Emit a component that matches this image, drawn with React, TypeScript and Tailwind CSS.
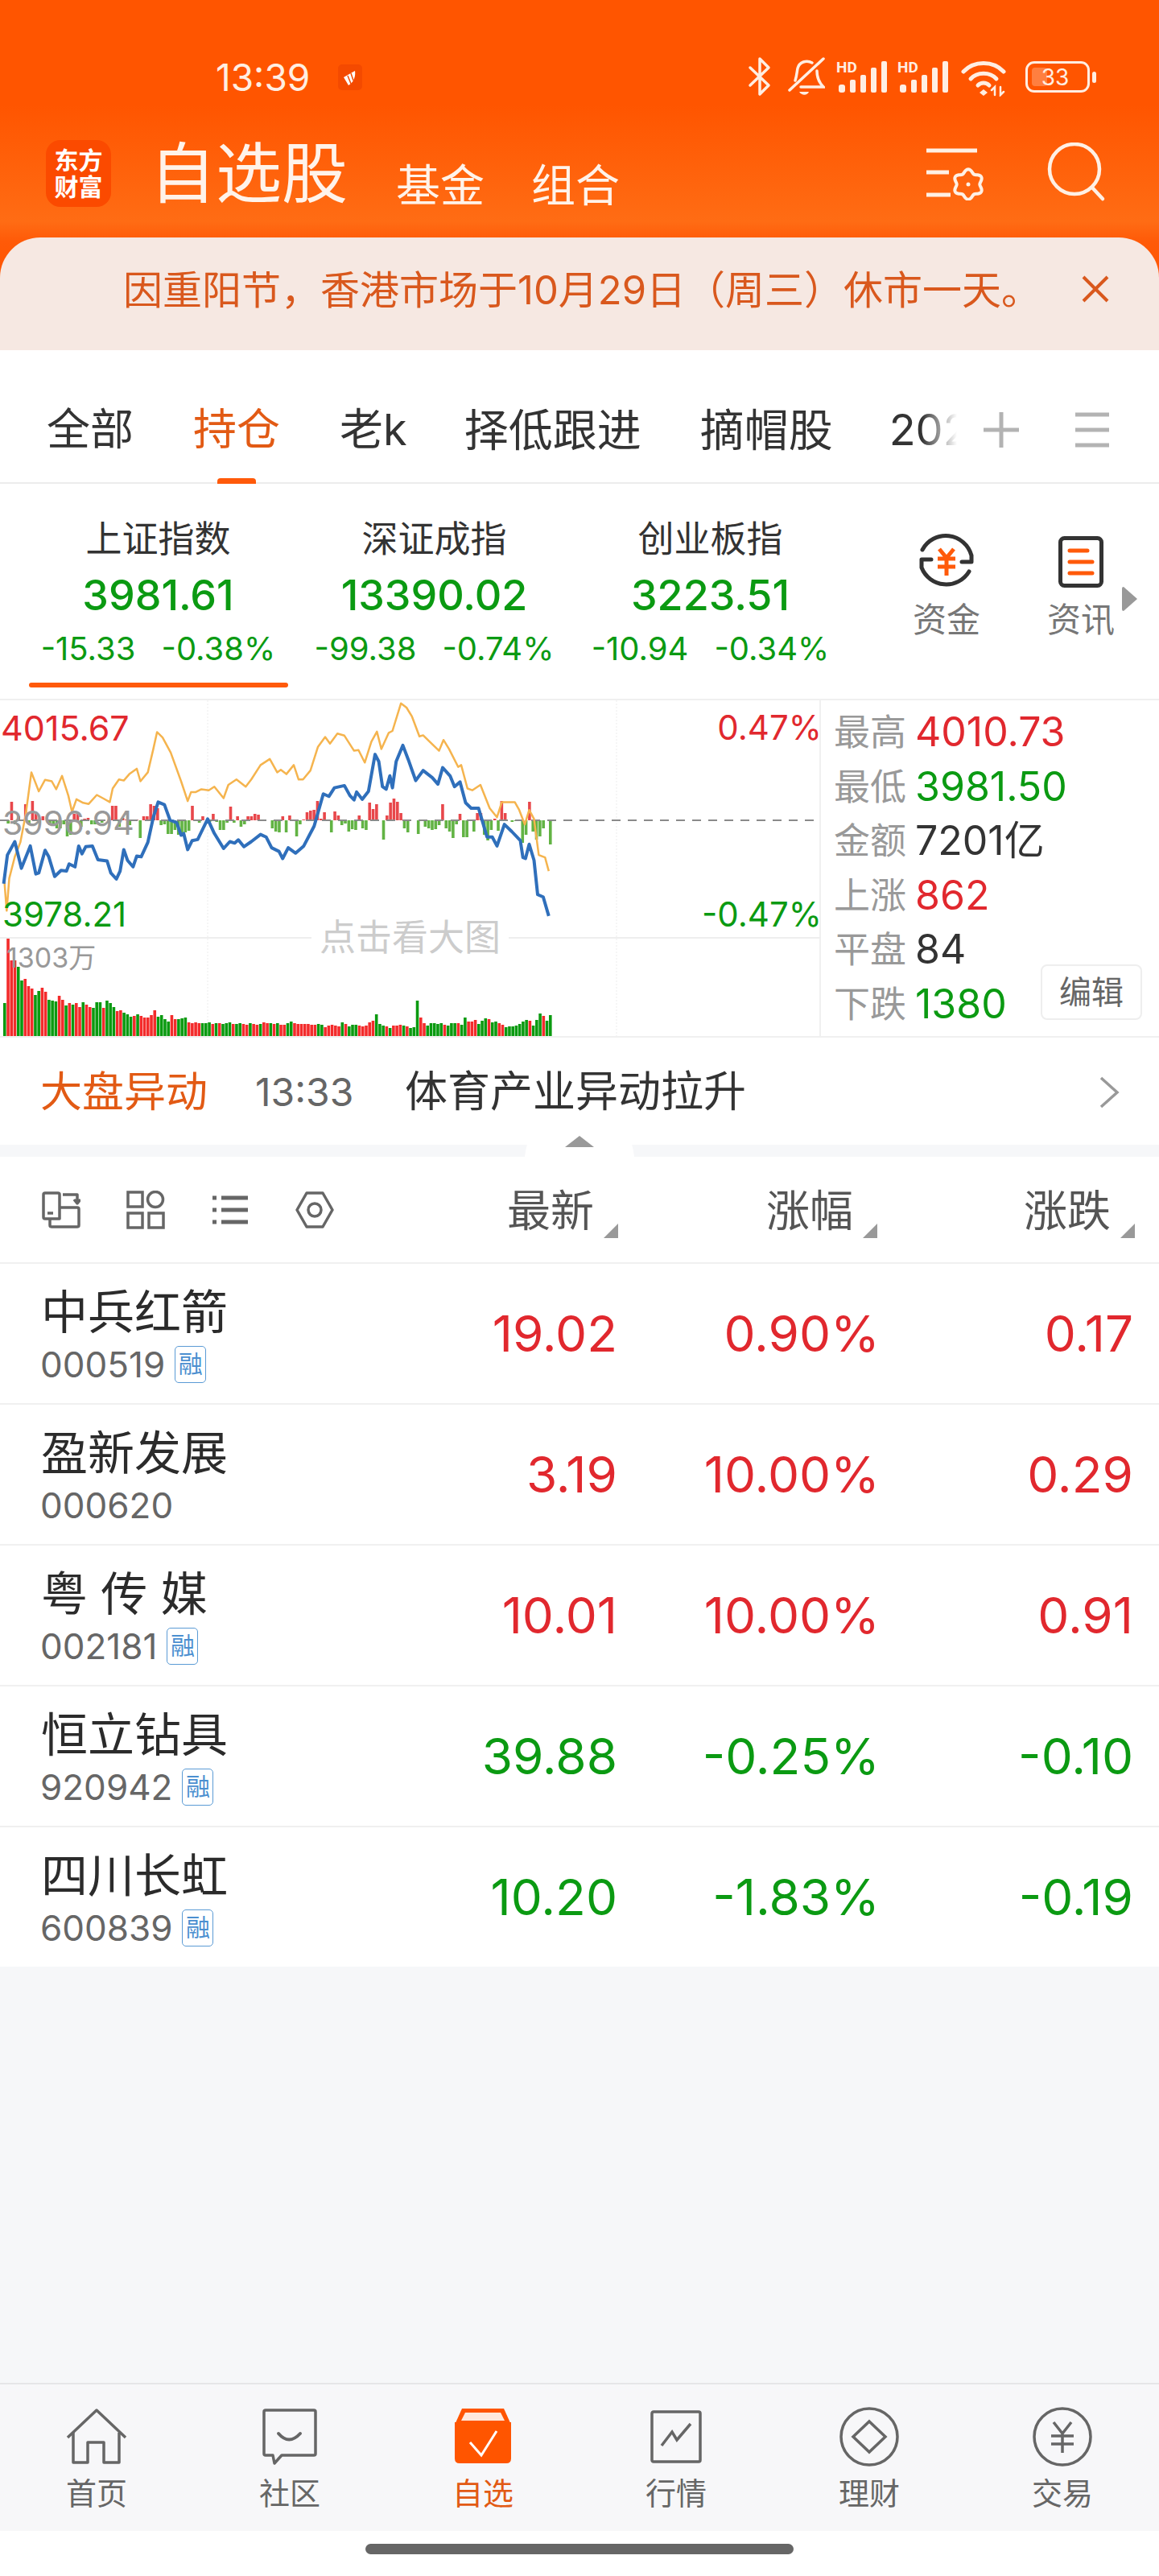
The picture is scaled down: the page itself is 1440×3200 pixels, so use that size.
import React from "react";

const UP = "text-[#e1282e]";
const DOWN = "text-[#0b9a12]";

// price lines, x/y on a 2.178 x 2.24 tracing grid, see toChart()
const avgLine: number[][] = [
  [12, 1110], [18, 1190], [25, 1100], [40, 1040], [55, 1000], [70, 920], [85, 805], [105, 858], [122, 826], [140, 830], [152, 852], [168, 815], [185, 870], [195, 915], [207, 880], [225, 890], [240, 893], [262, 868], [280, 878], [297, 888], [305, 850], [322, 825], [335, 828], [350, 810], [370, 795], [380, 830], [400, 805], [415, 740], [425, 693], [440, 708], [462, 750], [490, 830], [508, 885], [517, 860], [530, 860], [545, 852], [565, 855], [580, 845], [605, 877], [618, 840], [640, 825], [665, 845], [680, 825], [705, 785], [730, 768], [750, 805], [760, 798], [775, 810], [795, 785], [808, 825], [820, 825], [840, 800], [860, 735], [880, 707], [893, 725], [913, 697], [932, 703], [958, 745], [970, 743], [987, 778], [1005, 720], [1020, 692], [1032, 740], [1052, 695], [1062, 690], [1085, 613], [1100, 625], [1115, 650], [1135, 705], [1145, 702], [1165, 722], [1188, 745], [1200, 715], [1215, 740], [1240, 790], [1248, 785], [1265, 850], [1278, 855], [1300, 840], [1325, 905], [1345, 930], [1358, 888], [1393, 888], [1405, 910], [1420, 950], [1432, 910], [1445, 935], [1458, 1035], [1475, 1042], [1485, 1080],
];

const priceLine: number[][] = [
  [10, 1115], [20, 1035], [40, 998], [58, 1072], [82, 1010], [97, 1088], [105, 1085], [122, 1022], [132, 1040], [148, 1095], [165, 1078], [180, 1080], [187, 1060], [203, 1068], [213, 1010], [222, 1032], [232, 1012], [250, 1010], [265, 1048], [290, 1052], [300, 1085], [315, 1102], [325, 1080], [335, 1020], [345, 1050], [360, 1068], [370, 1038], [382, 1040], [400, 1000], [415, 930], [428, 888], [445, 895], [460, 938], [478, 945], [490, 980], [497, 975], [508, 1020], [520, 995], [535, 992], [562, 935], [580, 975], [605, 1017], [622, 998], [635, 1002], [645, 993], [660, 1012], [680, 998], [705, 978], [720, 985], [735, 1015], [755, 1025], [765, 1045], [780, 1015], [800, 1030], [822, 1010], [850, 955], [875, 865], [890, 872], [905, 848], [932, 842], [947, 870], [958, 882], [965, 860], [980, 880], [997, 858], [1015, 755], [1025, 775], [1035, 845], [1045, 852], [1055, 815], [1062, 848], [1072, 775], [1090, 730], [1105, 770], [1125, 828], [1145, 800], [1170, 820], [1185, 838], [1198, 792], [1218, 815], [1230, 845], [1245, 832], [1260, 890], [1275, 905], [1295, 905], [1318, 985], [1332, 985], [1345, 1010], [1365, 950], [1385, 970], [1408, 995], [1415, 1042], [1422, 1045], [1432, 1005], [1445, 1050], [1455, 1145], [1470, 1152], [1485, 1205],
];

// money flow bars around the previous close, + is red and - is green
const flowBars = [
  0, -4, 23, -5, 5, 0, 20, -4, 24, 8, -3, 5, 0, -6, -6, -10, -10, -5, -20, -18, 8, 10, -8, 2, 3, -5, -5, 0, -3, 0, 1, 18, 18, -8, 3, 1, -6, 1, 1, -22, 5, 5, 20, 18, 15, -6, -5, -17, -17, -12, -18, -20, -15, -13, 18, 0, -3, 5, 0, -2, 8, -2, -12, -12, -3, 17, -3, 5, -8, -5, 5, 5, 8, 7, 1, 0, 0, -10,
  -14, -15, 5, -15, 6, 1, -20, -5, 1, 10, 12, 13, 24, 2, 10, 1, -15, 11, 6, -6, -4, -14, -11, -12, 6, -10, -12, 22, 14, 20, 0, -24, 6, 22, 27, 23, 9, -10, -15, 0, 0, -17, 1, -8, -10, -12, -11, -6, 20, -10, -14, -22, -5, 8, -21, -21, 1, -14, 9, 9, -18, -25, -12, 2, -13, 24, 9, 0, -2, -1, -1, -28, -18, 23, -14, -24, -20, -10, 0, -30,
];

// volume bars: positive was an up minute (red), negative a down minute (green)
const volumeBars = [
  -41, 121, 94, 94, -86, -69, 71, 62, 59, -51, -56, 60, 55, -45, -44, -43, 50, 45, -38, 41, -39, 41, 36, -42, 39, 36, -35, -42, -42, 35, -44, -41, -36, 31, 32, -29, -27, -24, 25, -27, 25, 23, 23, 26, 32, -24, -26, -21, -18, 26, 21, -21, -22, -23, 17, 16, 17, 16, -16, -16, -17, 15, -16, 16, -15, -16, -17, 15, -15, -16, 15, 14, -16, 15, 14, -15, 17, 16,
  -16, 15, -16, 14, 14, -16, -18, 16, 15, 15, 15, 15, 14, 14, -15, -14, 11, 13, 14, 13, 12, -17, 15, -12, -14, -14, 13, 12, 13, 17, 19, -27, -15, -13, 12, -10, 13, 13, 14, -13, 12, -10, -11, -44, 23, 16, -13, -16, -16, -15, -16, 14, -13, -16, -16, 16, -14, -23, 18, 18, 20, -15, -19, -22, 21, -17, -18, 16, 14, -11, -12, -12, -13, -15, -18, -20, 19, -13, -20, -28, 25, -19, -26,
];

const toChart = (pts: number[][]) =>
  pts.map(([x, y]) => `${(x / 2.178).toFixed(1)},${(y / 2.24 - 270).toFixed(1)}`).join(" ");

const flowStep = 678 / (flowBars.length - 1);
const volumeStep = 678 / (volumeBars.length - 1);

const stocks = [
  { name: "中兵红箭", code: "000519", rong: true, price: "19.02", pct: "0.90%", diff: "0.17", up: true },
  { name: "盈新发展", code: "000620", rong: false, price: "3.19", pct: "10.00%", diff: "0.29", up: true },
  { name: "粤 传 媒", code: "002181", rong: true, price: "10.01", pct: "10.00%", diff: "0.91", up: true },
  { name: "恒立钻具", code: "920942", rong: true, price: "39.88", pct: "-0.25%", diff: "-0.10", up: false },
  { name: "四川长虹", code: "600839", rong: true, price: "10.20", pct: "-1.83%", diff: "-0.19", up: false },
];

const indexes = [
  { name: "上证指数", value: "3981.61", diff: "-15.33", pct: "-0.38%", active: true },
  { name: "深证成指", value: "13390.02", diff: "-99.38", pct: "-0.74%", active: false },
  { name: "创业板指", value: "3223.51", diff: "-10.94", pct: "-0.34%", active: false },
];

const SignalIcon = () => (
  <svg width="64" height="42" viewBox="0 0 64 42" fill="#ffeee2">
    <text x="0" y="17" fontSize="19" fontWeight="700" fontFamily="Roboto, sans-serif">HD</text>
    <rect x="3" y="32" width="8" height="10" rx="3" />
    <rect x="17" y="26" width="7" height="16" rx="2" />
    <rect x="30" y="20" width="7" height="22" rx="2" />
    <rect x="43" y="11" width="7" height="31" rx="2" />
    <rect x="56" y="3" width="7" height="39" rx="2" />
  </svg>
);

const StatusBar = () => (
  <div className="h-[172px] relative flex items-start pt-[72px] pl-[268px] text-[#ffeee2]">
    <span className="text-[46px] leading-[48px] w-[152px]">13:39</span>
    {/* little notification glyph beside the clock */}
    <svg width="30" height="32" viewBox="0 0 30 32" className="mt-[8px]">
      <rect width="30" height="32" rx="5" fill="#f44a00" />
      <path d="M7 16 L21 8 C22 14 20 22 13 26 Z" fill="#fff" />
      <path d="M12 14 L16 24 M16 11 L19 20" stroke="#f44a00" strokeWidth="1.5" />
    </svg>
    <div className="absolute left-[929px] top-[70px] flex items-start">
      <svg width="30" height="50" viewBox="0 0 30 50" fill="none" stroke="#ffeee2" strokeWidth="3.5" strokeLinecap="round" strokeLinejoin="round">
        <path d="M3 14 L26 36 L15 47 V3 L26 14 L3 36" />
      </svg>
      <svg width="46" height="50" viewBox="0 0 46 50" fill="none" stroke="#ffeee2" strokeWidth="3.5" strokeLinecap="round" className="ml-[20px]">
        <path d="M2 42 L44 3" />
        <path d="M9 30 C11 24 11 20 12 15 C14 7 23 4 30 8" />
        <path d="M36 18 C36 26 38 32 44 38 H16" />
        <path d="M14 44 H26 C24 49 17 49 14 44 Z" fill="#ffeee2" stroke="none" />
      </svg>
      <div className="ml-[14px] mt-[3px]"><SignalIcon /></div>
      <div className="ml-[12px] mt-[3px]"><SignalIcon /></div>
      <svg width="60" height="46" viewBox="0 0 60 46" fill="none" stroke="#ffeee2" strokeWidth="5" strokeLinecap="round" className="ml-[15px] mt-[4px]">
        <path d="M3 15 C16 1 40 1 53 15" />
        <path d="M12 24 C20 15 36 15 44 24" />
        <path d="M21 32 C25 28 31 28 35 32" />
        <path d="M28 37 L33 41 L28 45 L23 41 Z" fill="#ffeee2" stroke="none" />
        <path d="M42 44 V34 L38 38 M49 34 V44 L53 40" strokeWidth="2.5" />
      </svg>
      <div className="relative ml-[20px] mt-[6px] w-[80px] h-[39px] rounded-[11px] border-[3px] border-[#ffeee2] flex items-center justify-center">
        <div className="absolute left-[5px] top-[5px] bottom-[5px] w-[19px] rounded-[4px] bg-[#ffffff40]" />
        <span className="relative text-[28px] leading-none pr-[6px]">33</span>
        <div className="absolute right-[-11px] top-[10px] w-[5px] h-[14px] rounded-full bg-[#ffeee2]" />
      </div>
    </div>
  </div>
);

// scalloped nut drawn around the settings lines
const gearPath = () => {
  const pts: string[] = [];
  for (let i = 0; i < 72; i++) {
    const a = (i / 72) * Math.PI * 2;
    const r = 16.5 + 2.2 * Math.cos(a * 6);
    pts.push(`${(21 + r * Math.sin(a)).toFixed(2)},${(20 + r * Math.cos(a)).toFixed(2)}`);
  }
  return `M${pts.join(" L")} Z`;
};

const AppBar = () => (
  <div className="flex items-start pl-[57px] h-[123px] text-[#fff3ea]">
    <div className="w-[81px] h-[83px] mt-[2px] rounded-[18px] bg-[#fb4a00] flex flex-col items-center justify-center font-['Liberation_Serif','Noto_Sans_CJK_SC',serif] font-bold text-[30px] leading-[33px] text-white">
      <span>东方</span>
      <span>财富</span>
    </div>
    <span className="ml-[48px] text-[82px] leading-[88px]">自选股</span>
    <span className="ml-[60px] mt-[28px] text-[55px] leading-[60px]">基金</span>
    <span className="ml-[58px] mt-[28px] text-[55px] leading-[60px]">组合</span>
    <svg width="74" height="66" viewBox="0 0 74 66" fill="none" stroke="#fff0e4" strokeWidth="5" className="ml-[381px] mt-[11px]">
      <path d="M0 4 H63 M0 31 H28 M0 59 H30" />
      <path d={gearPath()} transform="translate(31 26)" strokeWidth="4" />
      <circle cx="52" cy="46" r="2.5" fill="#fff0e4" stroke="none" />
    </svg>
    <svg width="74" height="74" viewBox="0 0 74 74" fill="none" stroke="#fff0e4" strokeWidth="4.5" className="ml-[75px] mt-[5px]">
      <ellipse cx="35" cy="33" rx="31" ry="31" />
      <path d="M57 56 L70 70" strokeLinecap="round" />
    </svg>
  </div>
);

const Banner = () => (
  <div className="h-[140px] bg-[#f6e8e2] rounded-t-[50px] flex items-center pl-[153px] text-[#d9581d]">
    <span className="text-[49px] leading-[60px] w-[1190px] mt-[-8px] whitespace-nowrap">因重阳节，香港市场于10月29日（周三）休市一天。</span>
    <svg width="36" height="36" viewBox="0 0 36 36" fill="none" stroke="#d9581d" strokeWidth="4" className="mt-[-12px]">
      <path d="M3 3 L33 33 M33 3 L3 33" />
    </svg>
  </div>
);

const Tabs = () => (
  <div className="relative h-[166px] bg-white border-b-2 border-[#ececec] flex items-start pt-[65px] pl-[58px] text-[54px] leading-[68px] text-[#333]">
    <span>全部</span>
    <span className="ml-[74px] text-[#e25a14]">持仓</span>
    <span className="ml-[74px]">老k</span>
    <span className="ml-[71px] text-[55px]">择低跟进</span>
    <span className="ml-[73px] text-[55px]">摘帽股</span>
    <div className="relative ml-[70px] w-[84px] overflow-hidden whitespace-nowrap">
      2025
      <div className="absolute inset-y-0 right-0 w-[44px] bg-gradient-to-l from-white to-transparent" />
    </div>
    <svg width="44" height="44" viewBox="0 0 44 44" stroke="#b3b3b3" strokeWidth="5" className="ml-[33px] mt-[12px]">
      <path d="M22 0 V44 M0 22 H44" />
    </svg>
    <svg width="42" height="44" viewBox="0 0 42 44" stroke="#b3b3b3" strokeWidth="5" className="ml-[70px] mt-[12px]">
      <path d="M0 3 H42 M0 22 H42 M0 41 H42" />
    </svg>
    <div className="absolute left-[270px] bottom-[-2px] w-[48px] h-[7px] rounded-t-[4px] bg-[#ff5a0a]" />
  </div>
);

const IndexStrip = () => (
  <div className="h-[269px] bg-white flex pl-[25px] border-b-2 border-[#f0f0f0]">
    {indexes.map((idx) => (
      <div key={idx.name} className="w-[343px] flex flex-col items-center pt-[44px]">
        <div className="text-[45px] leading-[50px] text-[#333]">{idx.name}</div>
        <div className={`mt-[10px] text-[52px] leading-[70px] font-medium ${DOWN}`}>{idx.value}</div>
        <div className={`mt-[6px] text-[40px] leading-[50px] flex gap-[32px] ${DOWN}`}>
          <span>{idx.diff}</span>
          <span>{idx.pct}</span>
        </div>
        {idx.active && <div className="mt-[17px] w-[322px] h-[6px] rounded-full bg-[#ff5a0a]" />}
      </div>
    ))}
    <div className="w-[244px] flex flex-col items-center pt-[60px]">
      <svg width="70" height="70" viewBox="0 0 70 70" fill="none" stroke="#333" strokeWidth="5" strokeLinecap="round" strokeLinejoin="round">
        <path d="M5 22 A33 33 0 0 1 66 29 V37 H54" />
        <path d="M63 49 A33 33 0 0 1 4 44 V34 H16" />
        <path d="M26 21 L35 32 L44 21 M24 33 H46 M24 43 H46 M35 32 V54" stroke="#ff5a0a" strokeWidth="5" strokeLinecap="butt" />
      </svg>
      <span className="mt-[14px] text-[42px] leading-[50px] text-[#777]">资金</span>
    </div>
    <div className="relative w-[90px] flex flex-col items-center pt-[65px]">
      <svg width="56" height="64" viewBox="0 0 56 64" fill="none">
        <rect x="2.5" y="2.5" width="51" height="59" rx="5" stroke="#333" strokeWidth="5" />
        <path d="M14 18 H36 M14 32 H42 M14 46 H42" stroke="#ff5a0a" strokeWidth="5" strokeLinecap="round" />
      </svg>
      <span className="mt-[15px] text-[42px] leading-[50px] text-[#777]">资讯</span>
      <svg width="19" height="30" viewBox="0 0 19 30" fill="#999" className="absolute left-[96px] top-[128px]">
        <path d="M2 0 L19 15 L2 30 Q0 30 0 28 V2 Q0 0 2 0 Z" />
      </svg>
    </div>
  </div>
);

const MinuteChart = () => (
  <div className="relative w-[1020px] h-[417px] border-r-2 border-[#f0f0f0]">
    <svg width="1020" height="417" viewBox="0 0 1020 417" className="absolute inset-0">
      <path d="M258 0 V417 M766 0 V417" stroke="#f4f4f4" strokeWidth="1.5" strokeDasharray="2 2" />
      <path d="M0 295 H1020" stroke="#eeeeee" strokeWidth="2" />
      {flowBars.map((v, i) =>
        v === 0 ? null : (
          <rect
            key={i}
            x={4 + i * flowStep}
            y={v > 0 ? 149 - v : 149}
            width={3.6}
            height={Math.abs(v)}
            fill={v > 0 ? "#e8474b" : "#62b344"}
          />
        )
      )}
      <path d="M0 149 H1020" stroke="#8a8a8a" strokeWidth="2" strokeDasharray="11 9" />
      <polyline points={toChart(avgLine)} fill="none" stroke="#f5b44e" strokeWidth="2.5" strokeLinejoin="round" />
      <polyline points={toChart(priceLine)} fill="none" stroke="#2f6fbb" strokeWidth="4" strokeLinejoin="round" />
      {volumeBars.map((v, i) => (
        <rect
          key={i}
          x={4 + i * volumeStep}
          y={417 - Math.abs(v)}
          width={3.6}
          height={Math.abs(v)}
          fill={v > 0 ? "#f32b2b" : "#0a9a10"}
        />
      ))}
    </svg>
    <span className={`absolute left-[1px] top-[8px] text-[43px] leading-[52px] ${UP}`}>4015.67</span>
    <span className={`absolute right-[-3px] top-[8px] text-[42px] leading-[52px] ${UP}`}>0.47%</span>
    <span className="absolute left-[3px] top-[124px] text-[41px] leading-[56px] text-[#999]">3996.94</span>
    <span className={`absolute left-[3px] top-[240px] text-[42px] leading-[52px] ${DOWN}`}>3978.21</span>
    <span className={`absolute right-[-3px] top-[240px] text-[42px] leading-[52px] ${DOWN}`}>-0.47%</span>
    <span className="absolute left-[8px] top-[298px] text-[34px] leading-[44px] text-[#999]">1303万</span>
    <span className="absolute left-[387px] top-[270px] px-[10px] bg-white text-[45px] leading-[50px] text-[#ccc]">点击看大图</span>
  </div>
);

const statRows = [
  { label: "最高", value: "4010.73", cls: UP },
  { label: "最低", value: "3981.50", cls: DOWN },
  { label: "金额", value: "7201亿", cls: "text-[#333]" },
  { label: "上涨", value: "862", cls: UP },
  { label: "平盘", value: "84", cls: "text-[#333]" },
  { label: "下跌", value: "1380", cls: DOWN },
];

const MarketStats = () => (
  <div className="relative flex-1 pt-[6px] pl-[16px]">
    {statRows.map((row) => (
      <div key={row.label} className="h-[67.5px] flex items-center">
        <span className="w-[101px] text-[45px] text-[#999]">{row.label}</span>
        <span className={`text-[50px] ${row.cls}`}>{row.value}</span>
      </div>
    ))}
    <div className="absolute left-[273px] top-[328px] w-[126px] h-[69px] rounded-[8px] border-2 border-[#eeeeee] bg-white flex items-center justify-center text-[40px] text-[#666]">
      编辑
    </div>
  </div>
);

const ToolbarIcons = () => (
  <div className="flex items-center pl-[52px] w-[540px]">
    <svg width="48" height="46" viewBox="0 0 48 46" fill="none" stroke="#666" strokeWidth="3.5" strokeLinejoin="round">
      <path d="M22 34 H4 Q2 34 2 32 V4 Q2 2 4 2 H20 Q22 2 22 4 V34 Z" />
      <path d="M7 27 H14" />
      <path d="M10 34 V42 Q10 44 12 44 H44 Q46 44 46 42 V22 Q46 20 44 20 H22" />
      <path d="M26 4 H44 V14 M40 10 L44 15 L48 10" />
    </svg>
    <svg width="48" height="48" viewBox="0 0 48 48" fill="none" stroke="#666" strokeWidth="3.5" className="ml-[57px]">
      <rect x="2" y="2" width="18" height="18" />
      <circle cx="36" cy="11" r="9.5" />
      <rect x="2" y="28" width="18" height="18" />
      <rect x="28" y="28" width="18" height="18" />
    </svg>
    <svg width="45" height="38" viewBox="0 0 45 38" stroke="#666" strokeWidth="5" className="ml-[58px]">
      <path d="M12 4 H45 M12 19 H45 M12 34 H45" />
      <path d="M1 4 H6 M1 19 H6 M1 34 H6" />
    </svg>
    <svg width="48" height="46" viewBox="0 0 48 46" fill="none" stroke="#666" strokeWidth="3.5" strokeLinejoin="round" className="ml-[59px]">
      <path d="M14 2 H34 L46 23 L34 44 H14 L2 23 Z" />
      <circle cx="24" cy="23" r="8" />
    </svg>
  </div>
);

const SortHead = ({ label, width }: { label: string; width: string }) => (
  <div className={`${width} flex items-start justify-end pr-[2px] pt-[6px]`}>
    <span className="text-[54px] leading-[62px] text-[#555]">{label}</span>
    <svg width="18" height="18" viewBox="0 0 18 18" fill="#999" className="ml-[12px] mt-[46px]">
      <path d="M18 0 V18 H0 Z" />
    </svg>
  </div>
);

const StockRow = ({ s }: { s: (typeof stocks)[number] }) => {
  const color = s.up ? UP : DOWN;
  return (
    <div className="h-[175px] bg-white border-t-2 border-[#f0f0f0] flex items-center pl-[52px]">
      <div className="w-[400px] pt-[2px]">
        <div className="text-[58px] leading-[68px] text-[#2b2b2b] whitespace-pre ml-[-1px]">{s.name}</div>
        <div className="flex items-center mt-[6px] h-[50px]">
          <span className="text-[44px] leading-[50px] text-[#666] ml-[-2px]">{s.code}</span>
          {s.rong && (
            <span className="ml-[12px] w-[39px] h-[46px] rounded-[5px] border border-[#5b9bd5] text-[#4b8fd0] text-[30px] flex items-center justify-center">
              融
            </span>
          )}
        </div>
      </div>
      <div className={`w-[315px] text-right text-[62px] ${color}`}>{s.price}</div>
      <div className={`w-[326px] text-right text-[62px] ${color}`}>{s.pct}</div>
      <div className={`w-[315px] text-right text-[62px] ${color}`}>{s.diff}</div>
    </div>
  );
};

const navItems = [
  {
    label: "首页",
    icon: (
      <svg width="76" height="70" viewBox="0 0 76 70" fill="none" stroke="#666" strokeWidth="3.5" strokeLinejoin="round">
        <path d="M2 36 L38 2 L74 36" />
        <path d="M9 30 V67 H27 V42 H47 V67 H66 V30" />
      </svg>
    ),
  },
  {
    label: "社区",
    icon: (
      <svg width="68" height="70" viewBox="0 0 68 70" fill="none" stroke="#666" strokeWidth="3.5" strokeLinejoin="round">
        <path d="M4 2 H64 Q66 2 66 4 V56 Q66 58 64 58 H24 L15 68 L13 58 H4 Q2 58 2 56 V4 Q2 2 4 2 Z" />
        <path d="M20 31 Q33 46 47 31" strokeWidth="4" strokeLinecap="round" />
      </svg>
    ),
  },
  {
    label: "自选",
    active: true,
    icon: (
      <svg width="70" height="70" viewBox="0 0 70 70">
        <path d="M9 0 H61 L70 20 H0 Z" fill="#ff5500" />
        <path d="M13 5 H57 L62 15 H8 Z" fill="#ffe9dc" />
        <path d="M0 17 H70 V62 Q70 68 64 68 H6 Q0 68 0 62 Z" fill="#ff5500" />
        <path d="M19 42 L33 58 L52 28" fill="none" stroke="#fff" strokeWidth="3" />
      </svg>
    ),
  },
  {
    label: "行情",
    icon: (
      <svg width="64" height="66" viewBox="0 0 64 66" fill="none" stroke="#666" strokeWidth="3.5">
        <rect x="2" y="2" width="60" height="62" rx="2" />
        <path d="M14 44 L27 27 L33 37 L50 17" strokeWidth="3.5" />
      </svg>
    ),
  },
  {
    label: "理财",
    icon: (
      <svg width="74" height="74" viewBox="0 0 74 74" fill="none" stroke="#666" strokeWidth="3.5">
        <circle cx="37" cy="37" r="35" />
        <path d="M37 18 L57 37 L37 56 L17 37 Z" />
      </svg>
    ),
  },
  {
    label: "交易",
    icon: (
      <svg width="74" height="74" viewBox="0 0 74 74" fill="none" stroke="#666" strokeWidth="3.5">
        <circle cx="37" cy="37" r="35" />
        <path d="M26 19 L37 33 L48 19 M23 36 H51 M23 46 H51 M37 33 V57" />
      </svg>
    ),
  },
];

const BottomNav = () => (
  <div className="h-[184px] border-t-2 border-[#e6e6e8] bg-[#f7f7f9] flex">
    {navItems.map((item) => (
      <div key={item.label} className="w-[240px] flex flex-col items-center">
        <div className="h-[90px] mt-[20px] flex items-center justify-center">{item.icon}</div>
        <span className={`text-[38px] leading-[46px] mt-[2px] ${item.active ? "text-[#e25a14]" : "text-[#666]"}`}>
          {item.label}
        </span>
      </div>
    ))}
  </div>
);

export default function App() {
  return (
    <div className="w-[1440px] h-[3200px] flex flex-col bg-[#f6f7f9] font-[Inter,'Noto_Sans_CJK_SC',sans-serif]">
      <div className="bg-[linear-gradient(180deg,#ff5500_0px,#ff5500_130px,#ff6c14_275px,#ff5a08_300px,#ff5500_340px)]">
        <StatusBar />
        <AppBar />
        <Banner />
      </div>
      <Tabs />
      <IndexStrip />
      <div className="flex bg-white border-b-2 border-[#f0f0f0]">
        <MinuteChart />
        <MarketStats />
      </div>

      {/* market alert line, with the collapse handle hanging off it */}
      <div className="relative h-[133px] bg-white flex items-center pl-[50px] pt-[2px]">
        <span className="text-[52px] text-[#e25a14] w-[267px]">大盘异动</span>
        <span className="text-[48px] text-[#666] w-[186px]">13:33</span>
        <span className="text-[53px] text-[#333]">体育产业异动拉升</span>
        <svg width="26" height="40" viewBox="0 0 26 40" fill="none" stroke="#999" strokeWidth="3.5" className="absolute left-[1365px] top-[48px]">
          <path d="M3 2 L23 20 L3 38" />
        </svg>
      </div>
      <div className="relative h-[15px] bg-[#f6f7f9]">
        <svg width="136" height="36" viewBox="0 0 136 36" className="absolute left-[652px] bottom-0">
          <path d="M0 36 Q4 0 24 0 H112 Q132 0 136 36 Z" fill="#fff" />
          <path d="M50 24 L68 10 L86 24 Z" fill="#999" />
        </svg>
      </div>

      <div className="h-[131px] bg-white flex items-center">
        <ToolbarIcons />
        <SortHead label="最新" width="w-[230px]" />
        <SortHead label="涨幅" width="w-[322px]" />
        <SortHead label="涨跌" width="w-[320px]" />
      </div>
      {stocks.map((s) => (
        <StockRow key={s.code} s={s} />
      ))}
      <div className="flex-1" />
      <BottomNav />
      <div className="h-[56px] bg-white flex justify-center pt-[16px]">
        <div className="w-[532px] h-[13px] rounded-full bg-[#666]" />
      </div>
    </div>
  );
}
